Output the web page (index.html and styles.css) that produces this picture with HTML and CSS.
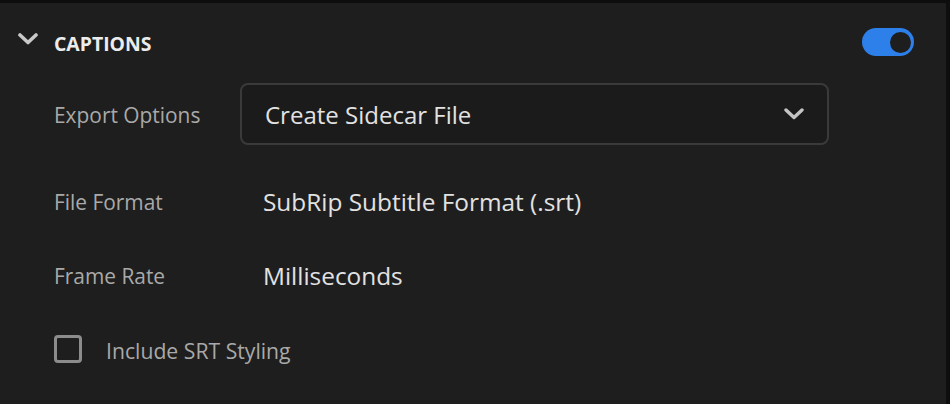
FILE: index.html
```html
<!DOCTYPE html>
<html>
<head>
<meta charset="utf-8">
<link rel="stylesheet" href="styles.css">
</head>
<body>
<div class="panel">
  <div class="header">
    <svg class="chev" width="20" height="12" viewBox="0 0 20 12"><path d="M2 2 L10 9.5 L18 2" fill="none" stroke="#c9c9c9" stroke-width="3.6" stroke-linecap="round" stroke-linejoin="round"/></svg>
    <span class="title">CAPTIONS</span>
    <span class="toggle"><span class="knob"></span></span>
  </div>
  <div class="row row-export">
    <span class="label">Export Options</span>
    <div class="select">
      <span class="select-text">Create Sidecar File</span>
      <svg class="select-chev" width="20" height="12" viewBox="0 0 20 12"><path d="M2 2 L10 9.5 L18 2" fill="none" stroke="#c4c4c4" stroke-width="3.4" stroke-linecap="round" stroke-linejoin="round"/></svg>
    </div>
  </div>
  <div class="row row-first">
    <span class="label">File Format</span>
    <span class="value">SubRip Subtitle Format (.srt)</span>
  </div>
  <div class="row">
    <span class="label">Frame Rate</span>
    <span class="value">Milliseconds</span>
  </div>
  <div class="row">
    <span class="checkbox"></span>
    <span class="check-label">Include SRT Styling</span>
  </div>
</div>
</body>
</html>
```
FILE: styles.css
```css
html, body {
  margin: 0;
  padding: 0;
  background: #1e1e1e;
}
body {
  font-family: "Open Sans", "Noto Sans", sans-serif;
}
.panel {
  width: 950px;
  height: 404px;
  box-sizing: border-box;
  border-top: 3px solid #0d0d0d;
  border-right: 4px solid #0e0e0e;
  background: #1e1e1e;
}
.header {
  height: 80px;
  display: flex;
  align-items: center;
  padding-left: 18px;
  padding-right: 32px;
}
.chev {
  display: block;
  margin-bottom: 9px;
}
.title {
  margin-left: 16px;
  font-weight: 700;
  font-size: 19.4px;
  color: #ececec;
  flex: 1;
}
.toggle {
  width: 52px;
  height: 28px;
  border-radius: 14px;
  background: #2d7fea;
  display: flex;
  align-items: center;
  justify-content: flex-end;
  padding-right: 3px;
  box-sizing: border-box;
  margin-top: -2px;
}
.knob {
  width: 21px;
  height: 21px;
  border-radius: 50%;
  background: #1e1e1e;
}
.row {
  display: flex;
  align-items: center;
  height: 74px;
  padding-left: 54px;
}
.row-export {
  height: 62px;
}
.row-first {
  margin-top: 19px;
}
.label {
  width: 186px;
  font-size: 20.9px;
  color: #a9a9a9;
  padding-top: 2px;
}
.value {
  padding-left: 23px;
  font-size: 24.4px;
  color: #e2e2e2;
}
.select {
  width: 589px;
  height: 62px;
  box-sizing: border-box;
  border: 2px solid #3a3a3a;
  border-radius: 8px;
  background: #1b1b1b;
  display: flex;
  align-items: center;
  padding-left: 23px;
  padding-right: 23px;
}
.select-text {
  flex: 1;
  font-size: 24px;
  color: #e2e2e2;
}
.select-chev {
  display: block;
}
.checkbox {
  width: 28px;
  height: 28px;
  box-sizing: border-box;
  border: 3px solid #8c8c8c;
  border-radius: 4px;
}
.check-label {
  margin-left: 24px;
  font-size: 21.2px;
  color: #a9a9a9;
  padding-top: 2px;
}
```
